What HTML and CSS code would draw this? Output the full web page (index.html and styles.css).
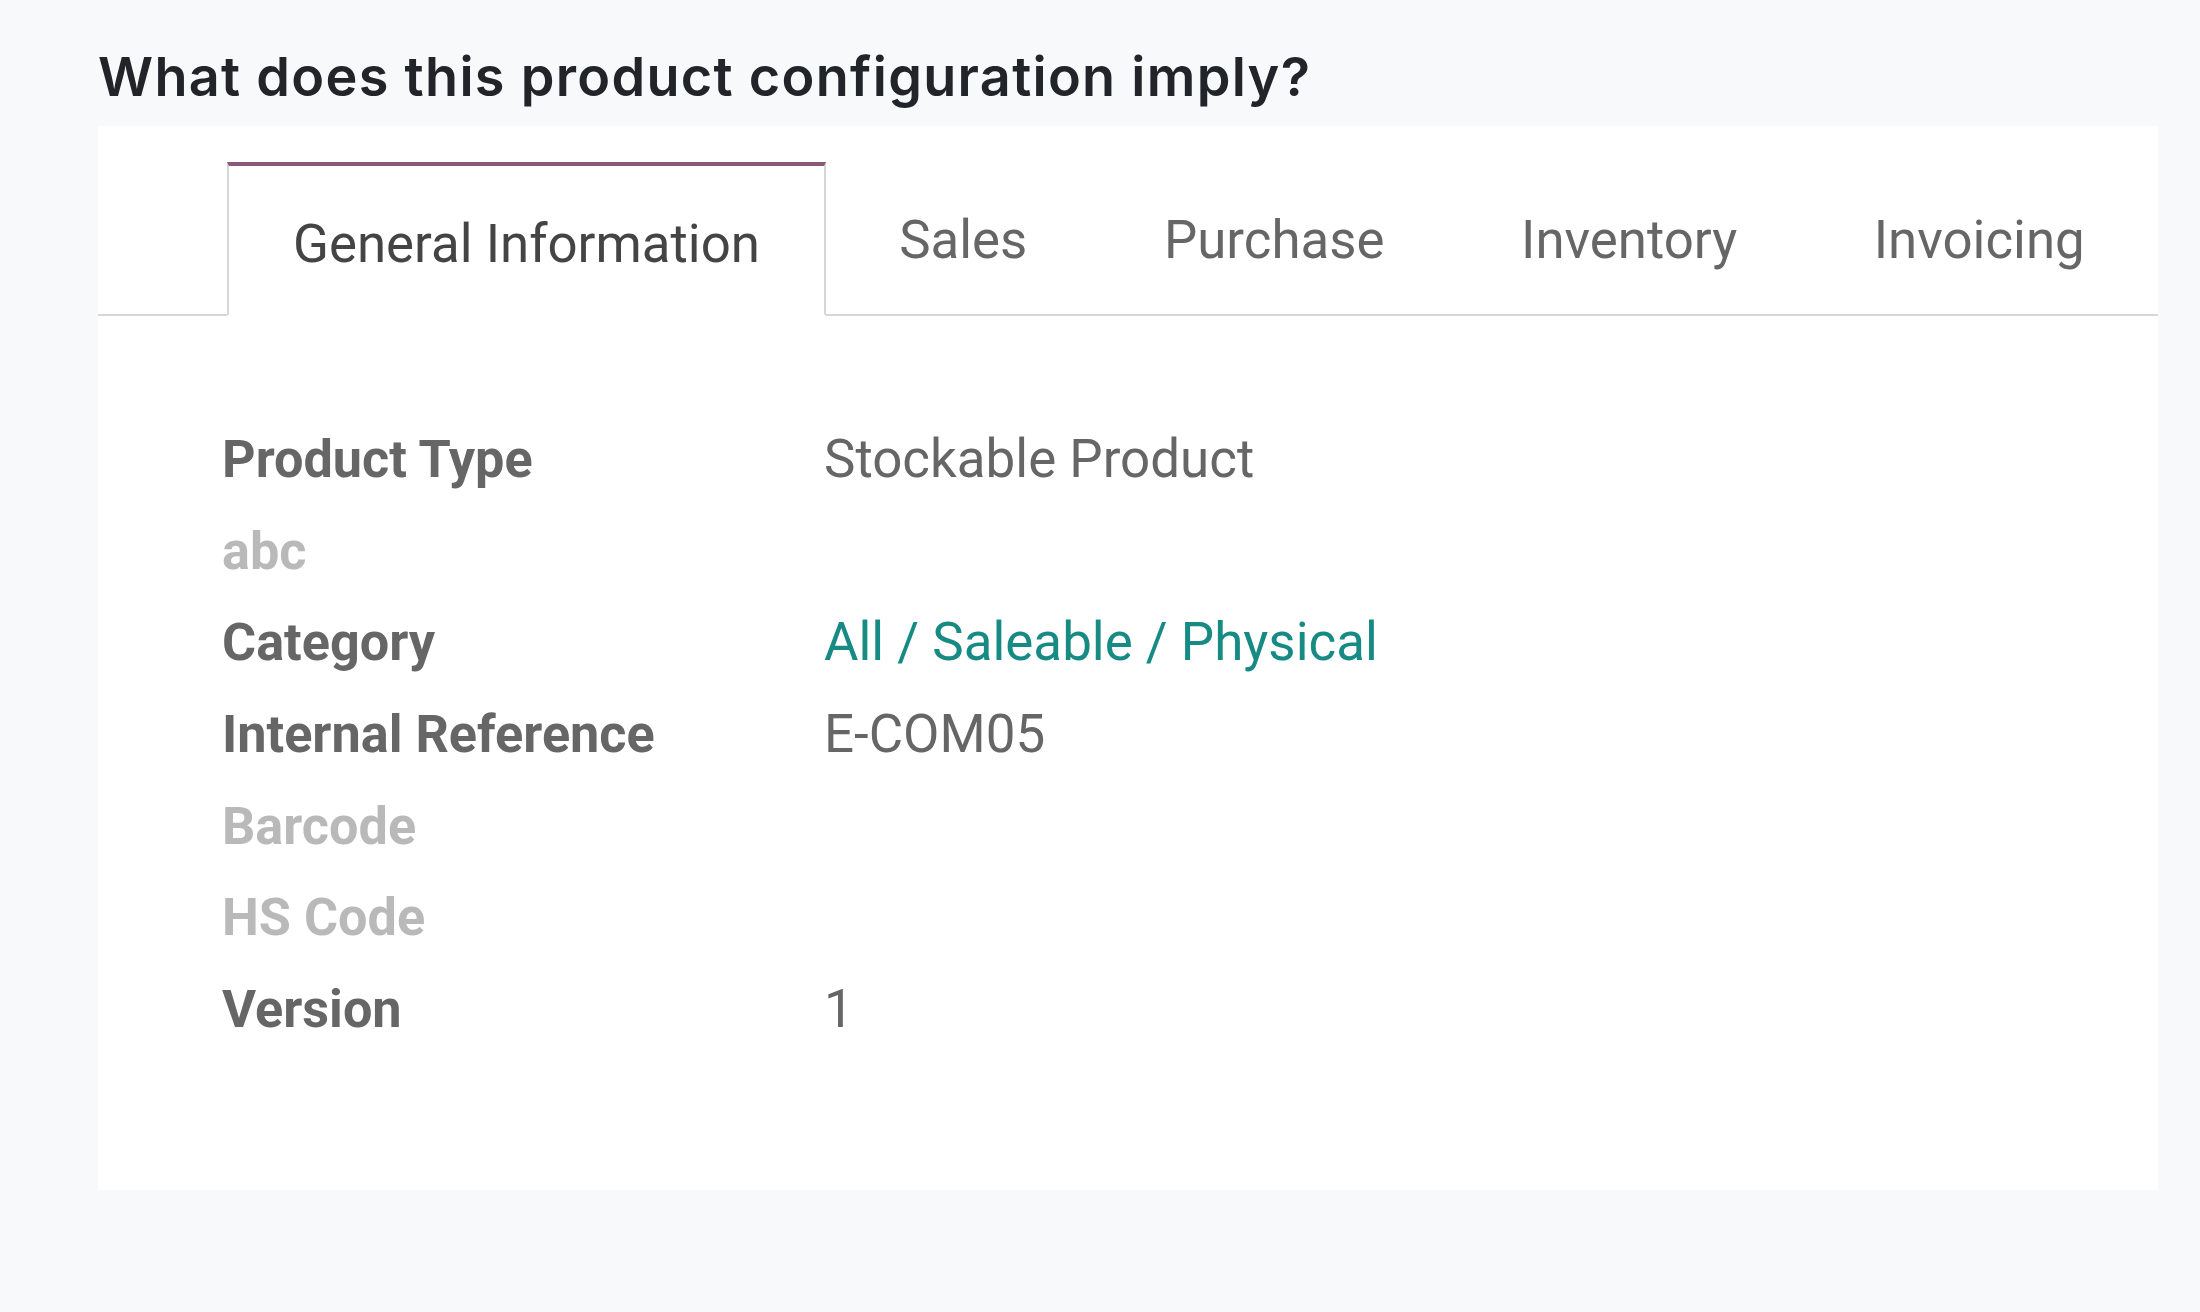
FILE: index.html
```html
<!DOCTYPE html>
<html lang="en">
<head>
<meta charset="utf-8">
<title>Product configuration</title>
<link rel="stylesheet" href="styles.css">
</head>
<body>
<main class="page">
  <h1 class="question">What does this product configuration imply?</h1>
  <section class="card">
    <ul class="tabs">
      <li class="tab tab-active">General Information</li>
      <li class="tab">Sales</li>
      <li class="tab">Purchase</li>
      <li class="tab">Inventory</li>
      <li class="tab">Invoicing</li>
    </ul>
    <div class="form">
      <div class="label">Product Type</div><div class="value">Stockable Product</div>
      <div class="label label-muted">abc</div><div class="value"></div>
      <div class="label">Category</div><div class="value value-link">All / Saleable / Physical</div>
      <div class="label">Internal Reference</div><div class="value">E-COM05</div>
      <div class="label label-muted">Barcode</div><div class="value"></div>
      <div class="label label-muted">HS Code</div><div class="value"></div>
      <div class="label">Version</div><div class="value">1</div>
    </div>
  </section>
</main>
</body>
</html>
```

FILE: styles.css
```css
html, body {
  margin: 0;
  padding: 0;
  background: #f8f9fa;
}

.page {
  padding: 49px 42px 0 98px;
}

.question {
  margin: 0 0 21px 0;
  font-family: "Inter", "Open Sans", sans-serif;
  font-weight: 600;
  font-size: 54px;
  line-height: 56px;
  color: #212529;
  letter-spacing: 1.3px;
}

.card {
  background: #ffffff;
  padding: 36px 0 134px 0;
}

.tabs {
  list-style: none;
  margin: 0;
  padding: 0 0 0 129px;
  display: flex;
  align-items: flex-end;
  border-bottom: 2px solid #d6d6d6;
  font-family: "Roboto", "Liberation Sans", sans-serif;
  font-size: 52.8px;
  line-height: 60px;
}

.tab {
  margin-bottom: -2px;
  padding: 44px 66.3px 44px 66.3px;
  border: 2px solid transparent;
  border-top: 4px solid transparent;
  color: #666666;
  white-space: nowrap;
}

.tab-active {
  padding: 48px 64px 40px 64px;
  margin-right: 5px;
  border-color: #d6d6d6;
  border-top-color: #875a7b;
  border-bottom-color: #ffffff;
  background: #ffffff;
  color: #444444;
}

.form {
  display: grid;
  grid-template-columns: 602px 1fr;
  grid-auto-rows: 91.67px;
  padding: 98px 0 0 124px;
  font-family: "Roboto", "Liberation Sans", sans-serif;
  font-size: 52.2px;
  line-height: 91.67px;
}

.label {
  font-weight: 700;
  color: #666666;
  white-space: nowrap;
}

.label-muted {
  color: #b9b9b9;
}

.value {
  font-size: 52.9px;
  color: #666666;
  white-space: nowrap;
}

.value-link {
  color: #178a84;
}
```
